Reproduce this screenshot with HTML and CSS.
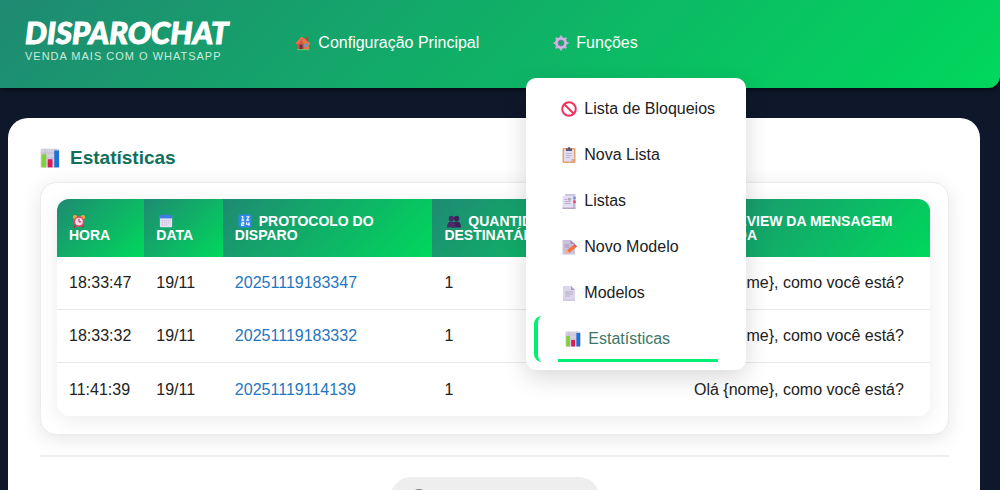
FILE: index.html
```html
<!DOCTYPE html>
<html lang="pt-BR">
<head>
    <meta charset="UTF-8">
    <meta name="viewport" content="width=device-width, initial-scale=1.0">
    <title>Estatísticas</title>
    <link rel="stylesheet" href="styles.css">
</head>
<body>
    <!-- Ícones -->
    <svg class="sprite" aria-hidden="true">
        <symbol id="i-casa" viewBox="0 0 16 16">
            <path d="M11 2h2v4h-2z" fill="#b5452f"/>
            <path d="M3 8l5-4 6 4v6.500H3z" fill="#e8744a"/>
            <path d="M0.500 8.500L6.500 1.500l9 7-1 1.200L7 4 2 9.500z" fill="#ff6a48"/>
            <path d="M3 9l3.500-4L9 9v5.500H3z" fill="#d9583f"/>
            <rect x="4.500" y="9.500" width="3" height="5" fill="#5a3350"/>
            <rect x="9.500" y="8.500" width="3.500" height="3.500" fill="#4aa3e8"/>
            <path d="M2 14h12.500v1.200H2z" fill="#6fc05a"/>
        </symbol>
        <symbol id="i-engrenagem" viewBox="0 0 16 16">
            <g stroke="#c3a9dc" stroke-width="2.200">
                <path d="M8 0.500v15M0.500 8h15M2.700 2.700l10.600 10.600M13.300 2.700L2.700 13.300"/>
            </g>
            <circle cx="8" cy="8" r="4.500" fill="#18a968" stroke="#cdb6e4" stroke-width="3"/>
            <circle cx="8" cy="8" r="3" fill="none" stroke="#8d72ad" stroke-width="0.800"/>
        </symbol>
        <symbol id="i-proibido" viewBox="0 0 16 16">
            <circle cx="8" cy="8" r="6.800" fill="none" stroke="#f0325c" stroke-width="2"/>
            <path d="M3.300 3.300l9.400 9.400" stroke="#f0325c" stroke-width="2"/>
        </symbol>
        <symbol id="i-prancheta" viewBox="0 0 16 16">
            <rect x="1.500" y="1" width="13" height="15" rx="1" fill="#e5a36c"/>
            <path d="M3 2.500h10v9.500l-2.500 2.500H3z" fill="#e3dcf0"/>
            <path d="M10.500 14.500V12H13z" fill="#b7a9cc"/>
            <path d="M5 1.500h1.500a1.500 1.500 0 0 1 3 0H11V4H5z" fill="#5d5a75"/>
            <path d="M5 6.500h6M5 8.500h6M5 10.500h4" stroke="#b9aecb" stroke-width="0.800"/>
        </symbol>
        <symbol id="i-paginas" viewBox="0 0 16 16">
            <path d="M4 1h10.500v11H4z" fill="#cfc6df"/>
            <path d="M1.500 3h10.500v12.500H1.500z" fill="#e6dff1"/>
            <path d="M12 3h2.500v12.500H12z" fill="#c2b7d4"/>
            <path d="M1.500 14.500h13V16h-13z" fill="#b4a8c6"/>
            <rect x="12.500" y="4" width="2" height="2" fill="#5b8fe0"/>
            <rect x="12.500" y="7.500" width="2" height="2.500" fill="#e0396a"/>
            <path d="M3.500 6.500h3M3.500 8.500h6M3.500 10.500h6" stroke="#b5a9c8" stroke-width="0.900"/>
            <rect x="7" y="5" width="3" height="2.500" fill="#b5a9c8"/>
        </symbol>
        <symbol id="i-memo" viewBox="0 0 16 16">
            <path d="M1.500 1h8L14 5v10.500H1.500z" fill="#cbc1dc"/>
            <path d="M9.500 1v4H14z" fill="#9d90b3"/>
            <path d="M3.500 6h5M3.500 8h5" stroke="#a092b5" stroke-width="0.900"/>
            <path d="M5 14.500l1-3.500 6.500-5 2.500 2.500-6.500 5.300z" fill="#f5733a"/>
            <path d="M12.500 6l1.200-1 2.300 2.500-1 1z" fill="#e03a5c"/>
            <path d="M5 14.500l1-3.500 2.500 2.800z" fill="#f3b98a"/>
        </symbol>
        <symbol id="i-pagina" viewBox="0 0 16 16">
            <path d="M2 1h8l4 4v10.500H2z" fill="#ddd6ea"/>
            <path d="M10 1v4h4z" fill="#a99dc0"/>
            <path d="M4 7h8M4 9h8M4 11h5" stroke="#b5a9c8" stroke-width="0.900"/>
            <path d="M2 14.700h12v0.800H2z" fill="#b9aecb"/>
        </symbol>
        <symbol id="i-grafico" viewBox="0 0 16 16">
            <rect x="0.500" y="0.500" width="15" height="15" rx="1" fill="#d6cfe2"/>
            <path d="M0.500 4h15M0.500 8h15M0.500 12h15M4 0.500v15M12 0.500v15" stroke="#b7adc8" stroke-width="0.500"/>
            <rect x="1.200" y="5" width="3.800" height="10.500" fill="#7fd13b"/>
            <rect x="6.200" y="9" width="3.800" height="6.500" fill="#d81b54"/>
            <rect x="11.400" y="2" width="3.800" height="13.500" fill="#1c73d4"/>
        </symbol>
        <symbol id="i-relogio" viewBox="0 0 16 16">
            <circle cx="3.500" cy="3.500" r="2.500" fill="#f2a73c"/>
            <circle cx="12.500" cy="3.500" r="2.500" fill="#f2a73c"/>
            <path d="M4 13l-1.500 2.500M12 13l1.500 2.500" stroke="#c2263f" stroke-width="1.600"/>
            <circle cx="8" cy="8.700" r="5.300" fill="#f8d9e2" stroke="#e8436a" stroke-width="1.800"/>
            <path d="M8 5.500v3.500h2.500" fill="none" stroke="#a3284a" stroke-width="1.100"/>
        </symbol>
        <symbol id="i-calendario" viewBox="0 0 16 16">
            <rect x="1" y="1" width="14" height="14" rx="1" fill="#e4def2"/>
            <rect x="1" y="1" width="14" height="4" fill="#3f7be0"/>
            <path d="M3 7.500h10M3 10h10M3 12.500h7" stroke="#c9bfe0" stroke-width="1.300" stroke-dasharray="1.600 0.800"/>
        </symbol>
        <symbol id="i-numeros" viewBox="0 0 16 16">
            <rect x="0.500" y="0.500" width="15" height="15" rx="2" fill="#2f86e8"/>
            <path d="M4 3h1.500v4M4 7h3M9.500 3.200h3L10 7h3M4 9.500h2.500v1.700H4V13h3M12.500 9.500v4M9.800 9.500v2.200H13.500" fill="none" stroke="#fff" stroke-width="1.200"/>
        </symbol>
        <symbol id="i-pessoas" viewBox="0 0 16 16">
            <circle cx="5" cy="5" r="3" fill="#4b2a6b"/>
            <circle cx="11" cy="5" r="3" fill="#3b2259"/>
            <path d="M6 15.500c0-5 2-7 5-7s5 2 5 7z" fill="#3b2259"/>
            <path d="M0 15.500c0-5 2-7 5-7s5 2 5 7z" fill="#4b2a6b"/>
        </symbol>
        <symbol id="i-olho" viewBox="0 0 16 16">
            <path d="M0.500 8Q8 0 15.500 8 8 16 0.500 8z" fill="#fff"/>
            <circle cx="8" cy="8" r="3" fill="#5a3350"/>
        </symbol>
        <symbol id="i-seta" viewBox="0 0 16 16">
            <circle cx="8" cy="8" r="7" fill="none" stroke="#777" stroke-width="2"/>
        </symbol>
    </svg>

    <header class="topbar">
        <a href="#" class="logo">
            <span class="logo-name">DISPAROCHAT</span>
            <span class="logo-tagline">VENDA MAIS COM O WHATSAPP</span>
        </a>
        <nav class="nav">
            <ul class="nav-list">
                <li class="nav-item">
                    <a href="#" class="nav-link"><svg class="icon"><use href="#i-casa"/></svg>Configuração Principal</a>
                </li>
                <li class="nav-item">
                    <a href="#" class="nav-link"><svg class="icon"><use href="#i-engrenagem"/></svg>Funções</a>
                    <ul class="submenu">
                        <li><a href="#" class="submenu-link"><svg class="icon"><use href="#i-proibido"/></svg>Lista de Bloqueios</a></li>
                        <li><a href="#" class="submenu-link"><svg class="icon"><use href="#i-prancheta"/></svg>Nova Lista</a></li>
                        <li><a href="#" class="submenu-link"><svg class="icon"><use href="#i-paginas"/></svg>Listas</a></li>
                        <li><a href="#" class="submenu-link"><svg class="icon"><use href="#i-memo"/></svg>Novo Modelo</a></li>
                        <li><a href="#" class="submenu-link"><svg class="icon"><use href="#i-pagina"/></svg>Modelos</a></li>
                        <li><a href="#" class="submenu-link active"><svg class="icon"><use href="#i-grafico"/></svg>Estatísticas</a></li>
                    </ul>
                </li>
            </ul>
        </nav>
    </header>

    <main class="content">
        <h1 class="title"><svg class="title-icon"><use href="#i-grafico"/></svg>Estatísticas</h1>

        <section class="panel">
            <table class="stats">
                <thead>
                    <tr>
                        <th class="col-hora"><svg class="th-icon"><use href="#i-relogio"/></svg> HORA</th>
                        <th class="col-data"><svg class="th-icon"><use href="#i-calendario"/></svg> DATA</th>
                        <th class="col-protocolo"><svg class="th-icon"><use href="#i-numeros"/></svg> PROTOCOLO DO DISPARO</th>
                        <th><svg class="th-icon"><use href="#i-pessoas"/></svg> QUANTIDADE DE DESTINATÁRIOS</th>
                        <th class="col-preview"><svg class="th-icon"><use href="#i-olho"/></svg> PREVIEW DA MENSAGEM ENVIADA</th>
                    </tr>
                </thead>
                <tbody>
                    <tr>
                        <td>18:33:47</td>
                        <td>19/11</td>
                        <td><a href="#">20251119183347</a></td>
                        <td>1</td>
                        <td>Olá {nome}, como você está?</td>
                    </tr>
                    <tr>
                        <td>18:33:32</td>
                        <td>19/11</td>
                        <td><a href="#">20251119183332</a></td>
                        <td>1</td>
                        <td>Olá {nome}, como você está?</td>
                    </tr>
                    <tr>
                        <td>11:41:39</td>
                        <td>19/11</td>
                        <td><a href="#">20251119114139</a></td>
                        <td>1</td>
                        <td>Olá {nome}, como você está?</td>
                    </tr>
                </tbody>
            </table>
        </section>

        <div class="footer-bar">
            <button type="button" class="footer-btn"><svg class="icon"><use href="#i-seta"/></svg></button>
        </div>
    </main>
</body>
</html>
```

FILE: styles.css
```css
* {
    box-sizing: border-box;
}

body {
    margin: 0;
    background: #0f172a;
    color: #222;
    font-family: "Liberation Sans", Arial, sans-serif;
    font-size: 16px;
}

ul {
    list-style: none;
    margin: 0;
    padding: 0;
}

a {
    text-decoration: none;
}

.sprite {
    display: none;
}

.icon {
    width: 16px;
    height: 16px;
    flex-shrink: 0;
}

/* Topo */
.topbar {
    display: flex;
    align-items: center;
    gap: 40px;
    padding: 15px 25px 26px;
    background: linear-gradient(135deg, #1f8a72, #00d85c);
    border-bottom-right-radius: 12px;
    box-shadow: 0 2px 4px rgba(0, 0, 0, 0.5);
}

.logo {
    display: flex;
    flex-direction: column;
    color: #fff;
}

.logo-name {
    font-family: Lato, sans-serif;
    font-size: 31px;
    line-height: 35px;
    font-weight: 900;
    font-style: italic;
    -webkit-text-stroke: 1px #fff;
}

.logo-tagline {
    font-size: 11px;
    line-height: 12px;
    letter-spacing: 1px;
    color: #c9ebde;
}

.nav {
    padding-top: 8px;
}

.nav-list {
    display: flex;
    gap: 20px;
}

.nav-item {
    position: relative;
    padding: 0 27px;
}

.nav-link {
    display: flex;
    align-items: center;
    gap: 7px;
    color: #fff;
}

/* Submenu */
.submenu {
    position: absolute;
    top: 44px;
    left: 0;
    z-index: 10;
    width: 220px;
    padding: 8px;
    background: #fff;
    border-radius: 10px;
    box-shadow: 0 8px 24px rgba(0, 0, 0, 0.15);
}

.submenu-link {
    position: relative;
    display: flex;
    align-items: center;
    gap: 7px;
    height: 46px;
    padding: 0 27px;
    color: #222;
    white-space: nowrap;
}

.submenu-link.active {
    border-left: 4px solid #00f076;
    border-radius: 8px;
    color: #3c7867;
}

.submenu-link.active::after {
    content: "";
    position: absolute;
    left: 20px;
    right: 20px;
    bottom: 0;
    height: 3px;
    background: #00f076;
}

/* Conteúdo */
.content {
    margin: 30px 20px 0 8px;
    padding: 28px 31px 32px 32px;
    background: #fff;
    border-radius: 20px 20px 0 0;
}

.title {
    display: flex;
    align-items: center;
    gap: 10px;
    margin: 0 0 12px;
    font-size: 19px;
    line-height: 24px;
    color: #10705a;
}

.title-icon {
    width: 20px;
    height: 20px;
}

.panel {
    padding: 16px 18px 18px 16px;
    background: #fff;
    border: 1px solid #ececec;
    border-radius: 16px;
    box-shadow: 0 4px 20px rgba(0, 0, 0, 0.1);
}

.stats {
    width: 100%;
    table-layout: fixed;
    border-collapse: separate;
    border-spacing: 0;
    border-radius: 12px;
    overflow: hidden;
    box-shadow: 0 4px 20px rgba(0, 0, 0, 0.08);
}

.stats th {
    height: 58px;
    padding: 0 12px;
    background: linear-gradient(135deg, #1f8a72, #00d85c);
    color: #fff;
    font-size: 14px;
    line-height: 14px;
    text-align: left;
}

.stats td {
    height: 53px;
    padding: 0 12px;
    border-bottom: 1px solid #e8e8e8;
}

.stats tr:last-child td {
    border-bottom: none;
}

.stats td a {
    color: #2576be;
}

.th-icon {
    width: 14px;
    height: 14px;
    margin: 0 3px;
    vertical-align: bottom;
}

.col-hora {
    width: 10%;
}

.col-data {
    width: 9%;
}

.col-protocolo {
    width: 24%;
}

.col-preview {
    width: 248px;
}

.footer-bar {
    display: flex;
    justify-content: center;
    margin-top: 20px;
    padding-top: 20px;
    border-top: 2px solid #eee;
}

.footer-btn {
    width: 208px;
    padding: 12px 20px;
    border: none;
    border-radius: 20px;
    background: #eee;
    text-align: left;
}
```
